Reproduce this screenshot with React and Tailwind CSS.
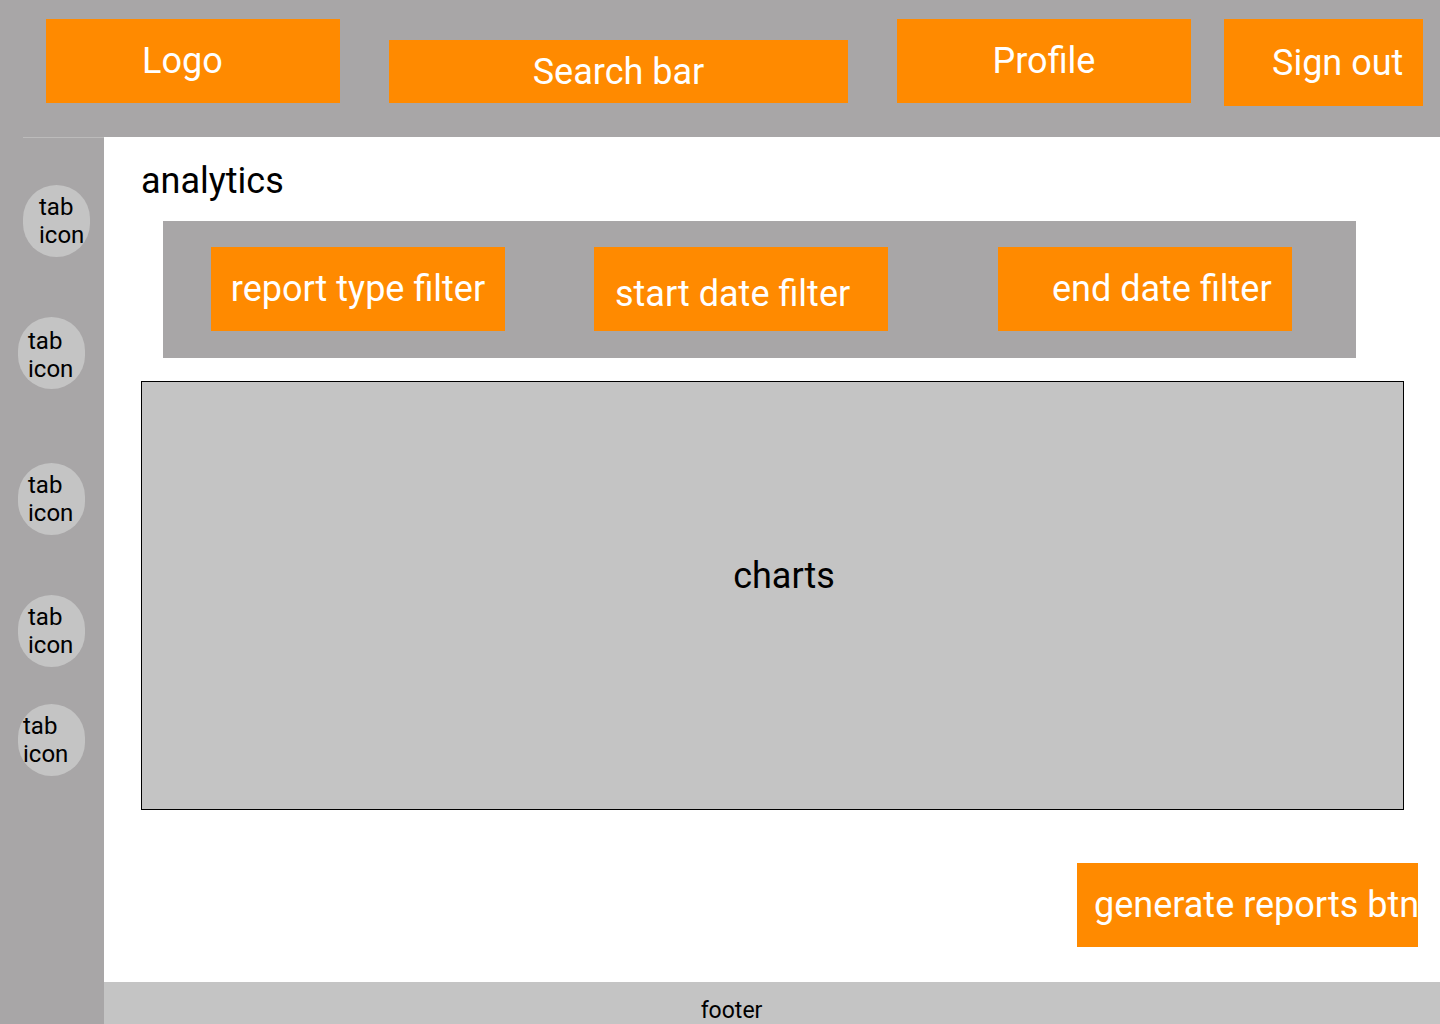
import React from 'react'

const FONT = { fontFamily: 'Roboto, "Liberation Sans", sans-serif' }

// left offset of text inside each tab circle, and top margin before each
const TABS = [
  { mt: 'mt-[47px]', ml: 'ml-[23px]', pl: 'pl-[16px]', pt: '' },
  { mt: 'mt-[60px]', ml: 'ml-[18px]', pl: 'pl-[10px]', pt: 'pt-[4px]' },
  { mt: 'mt-[74px]', ml: 'ml-[18px]', pl: 'pl-[10px]', pt: '' },
  { mt: 'mt-[60px]', ml: 'ml-[18px]', pl: 'pl-[10px]', pt: '' },
  { mt: 'mt-[37px]', ml: 'ml-[18px]', pl: 'pl-[5px]', pt: '' },
]

function OrangeBox({ className = '', children }) {
  return (
    <div className={`bg-[#ff8a00] text-white text-[36px] leading-[42px] flex items-center whitespace-nowrap overflow-hidden ${className}`}>
      {children}
    </div>
  )
}

export default function App() {
  return (
    <div className="w-[1440px] h-[1024px] overflow-hidden bg-white flex flex-col" style={FONT}>
      {/* Header */}
      <header className="h-[137px] shrink-0 bg-[#a8a6a7] flex items-start pl-[46px] pt-[19px]">
        <OrangeBox className="w-[294px] h-[84px] pl-[96px]">Logo</OrangeBox>
        <OrangeBox className="w-[459px] h-[63px] ml-[49px] mt-[21px] justify-center">Search bar</OrangeBox>
        <OrangeBox className="w-[294px] h-[84px] ml-[49px] justify-center">Profile</OrangeBox>
        <OrangeBox className="w-[199px] h-[87px] ml-[33px] pl-[48px]">Sign out</OrangeBox>
      </header>

      <div className="flex flex-1 min-h-0">
        {/* Sidebar */}
        <aside className="w-[104px] shrink-0 bg-[#a8a6a7] flex flex-col">
          <div className="h-px ml-[23px] bg-[#bcbbbb]" />
          {TABS.map((t, i) => (
            <div
              key={i}
              className={`w-[67px] h-[72px] rounded-full bg-[#c4c4c4] flex flex-col justify-center text-[24px] leading-[28px] text-black ${t.mt} ${t.ml} ${t.pl} ${t.pt}`}
            >
              <span>tab</span>
              <span>icon</span>
            </div>
          ))}
        </aside>

        {/* Main */}
        <main className="flex-1 flex flex-col min-w-0">
          <div className="pl-[37px] flex flex-col">
            <h1 className="mt-[23px] h-[42px] text-[36px] leading-[42px] font-normal text-black">analytics</h1>

            {/* Filters */}
            <div className="mt-[19px] ml-[22px] w-[1193px] h-[137px] bg-[#a8a6a7] flex items-start pt-[26px] pl-[48px]">
              <OrangeBox className="w-[294px] h-[84px] justify-center">report type filter</OrangeBox>
              <OrangeBox className="w-[294px] h-[84px] ml-[89px] pl-[21px] pt-[10px]">start date filter</OrangeBox>
              <OrangeBox className="w-[294px] h-[84px] ml-[110px] pl-[54px]">end date filter</OrangeBox>
            </div>

            {/* Charts */}
            <div className="mt-[23px] w-[1263px] h-[429px] bg-[#c4c4c4] border border-black flex justify-center pl-[23px] pt-[173px]">
              <span className="text-[36px] leading-[42px] h-[42px] text-black">charts</span>
            </div>
          </div>

          <div className="flex justify-end pr-[22px] mt-[53px]">
            <OrangeBox className="w-[341px] h-[84px] pl-[17px]">generate reports btn</OrangeBox>
          </div>

          {/* Footer */}
          <footer className="mt-auto h-[42px] bg-[#c4c4c4] flex justify-center pr-[81px] pt-[15px] overflow-hidden">
            <span className="text-[23px] leading-[27px] text-black">footer</span>
          </footer>
        </main>
      </div>
    </div>
  )
}
